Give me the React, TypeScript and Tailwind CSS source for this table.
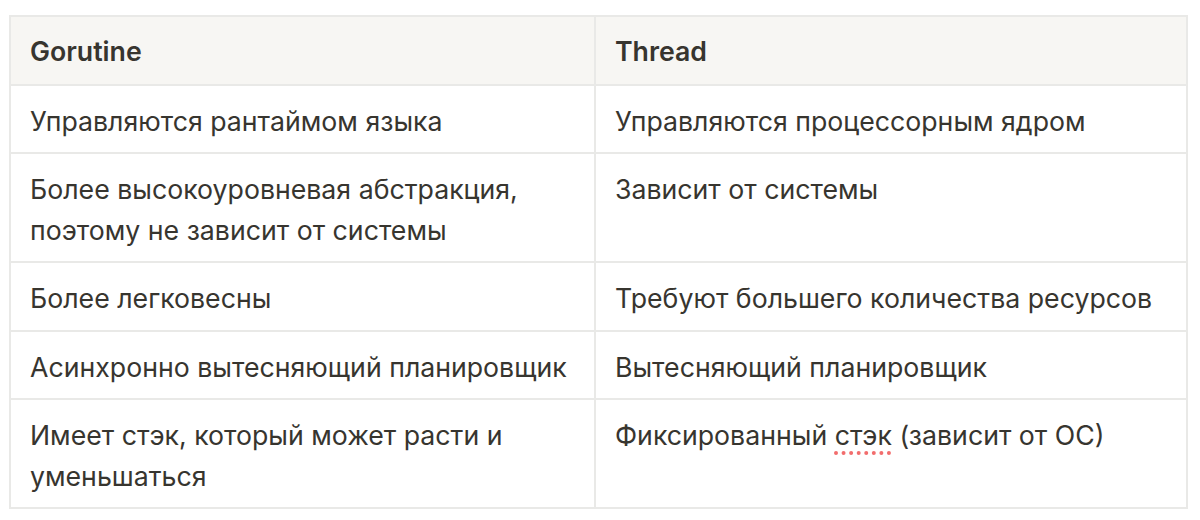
const rows: [React.ReactNode, React.ReactNode][] = [
  ["Управляются рантаймом языка", "Управляются процессорным ядром"],
  [
    "Более высокоуровневая абстракция, поэтому не зависит от системы",
    "Зависит от системы",
  ],
  ["Более легковесны", "Требуют большего количества ресурсов"],
  ["Асинхронно вытесняющий планировщик", "Вытесняющий планировщик"],
  [
    "Имеет стэк, который может расти и уменьшаться",
    <>
      Фиксированный{" "}
      <span className="underline decoration-dotted decoration-[#f26d6d] decoration-[4px] underline-offset-[6px]">
        стэк
      </span>{" "}
      (зависит от ОС)
    </>,
  ],
];

export default function App() {
  return (
    <div
      className="min-h-[520px] bg-white pl-[9px] pt-[15px]"
      style={{ fontFamily: "Inter, 'Noto Sans', sans-serif" }}
    >
      <table className="w-[1179px] table-fixed border-collapse border-2 border-[#e9e9e7] text-[26.7px] leading-[40.5px] text-[#37352f]">
        <colgroup>
          <col className="w-[585px]" />
          <col />
        </colgroup>
        <thead>
          <tr className="bg-[#f7f6f3]">
            <th className="border-2 border-[#e9e9e7] px-[19px] pt-[14px] pb-[12px] text-left font-semibold">
              Gorutine
            </th>
            <th className="border-2 border-[#e9e9e7] px-[19px] pt-[14px] pb-[12px] text-left font-semibold">
              Thread
            </th>
          </tr>
        </thead>
        <tbody>
          {rows.map(([a, b], i) => (
            <tr key={i}>
              <td className="border-2 border-[#e9e9e7] px-[19px] pt-[15px] pb-[11px] align-top">{a}</td>
              <td className="border-2 border-[#e9e9e7] px-[19px] pt-[15px] pb-[11px] align-top">{b}</td>
            </tr>
          ))}
        </tbody>
      </table>
    </div>
  );
}
